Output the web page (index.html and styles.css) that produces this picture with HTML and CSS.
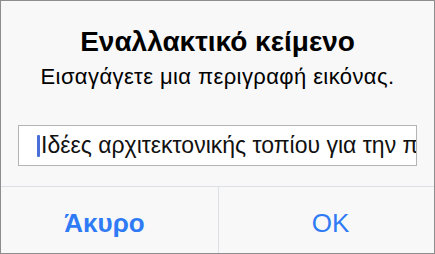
FILE: index.html
```html
<!DOCTYPE html>
<html lang="el">
  <head>
    <meta charset="UTF-8" />
    <meta name="viewport" content="width=device-width, initial-scale=1.0" />
    <title>Εναλλακτικό κείμενο</title>
    <link rel="stylesheet" href="styles.css">
  </head>
  <body>
    <div class="alert-box">
      <div class="alert-content">
        <h2>Εναλλακτικό κείμενο</h2>
        <p>Εισαγάγετε μια περιγραφή εικόνας.</p>
        <div class="input-field">
          <span class="caret"></span>
          <span class="input-text">Ιδέες αρχιτεκτονικής τοπίου για την π</span>
        </div>
      </div>
      <div class="alert-actions">
        <button type="button" class="action-button cancel">Άκυρο</button>
        <button type="button" class="action-button ok">OK</button>
      </div>
    </div>
  </body>
</html>
```

FILE: styles.css
```css
/* Alert dialog */
body {
  margin: 0;
  font-family: "Liberation Sans", Arial, sans-serif;
  background: #f8f8f8;
}

.alert-box {
  width: 435px;
  height: 254px;
  box-sizing: border-box;
  border: 1px solid #8d8d8d;
  background: #f8f8f8;
  display: flex;
  flex-direction: column;
}

.alert-content {
  flex: none;
  padding: 25px 17px 0;
  height: 186px;
  box-sizing: border-box;
  border-bottom: 1px solid #dcdfe5;
  text-align: center;
}

.alert-content h2 {
  margin: 0;
  font-size: 28px;
  line-height: 32px;
  font-weight: bold;
  color: #000;
}

.alert-content p {
  margin: 6px 0 0;
  font-size: 22px;
  line-height: 26px;
  letter-spacing: 0.4px;
  color: #000;
}

.input-field {
  margin-top: 35px;
  height: 41px;
  box-sizing: border-box;
  border: 1px solid #b4b4b4;
  background: #fff;
  display: flex;
  align-items: center;
  padding-left: 18px;
  overflow: hidden;
  text-align: left;
  white-space: nowrap;
}

.caret {
  flex: none;
  width: 3px;
  height: 22px;
  margin-right: 1px;
  border-radius: 1px;
  background: #4a6fd8;
}

.input-text {
  font-size: 23px;
  color: #111;
}

.alert-actions {
  flex: 1;
  display: flex;
}

.action-button {
  flex: 1;
  border: none;
  background: none;
  font-family: inherit;
  font-size: 26px;
  color: #2f7bf5;
  padding: 6px 0 0;
  cursor: pointer;
}

.action-button.cancel {
  font-weight: bold;
  padding-right: 10px;
  border-right: 1px solid #dcdfe5;
}

.action-button.ok {
  padding-left: 8px;
}
```
